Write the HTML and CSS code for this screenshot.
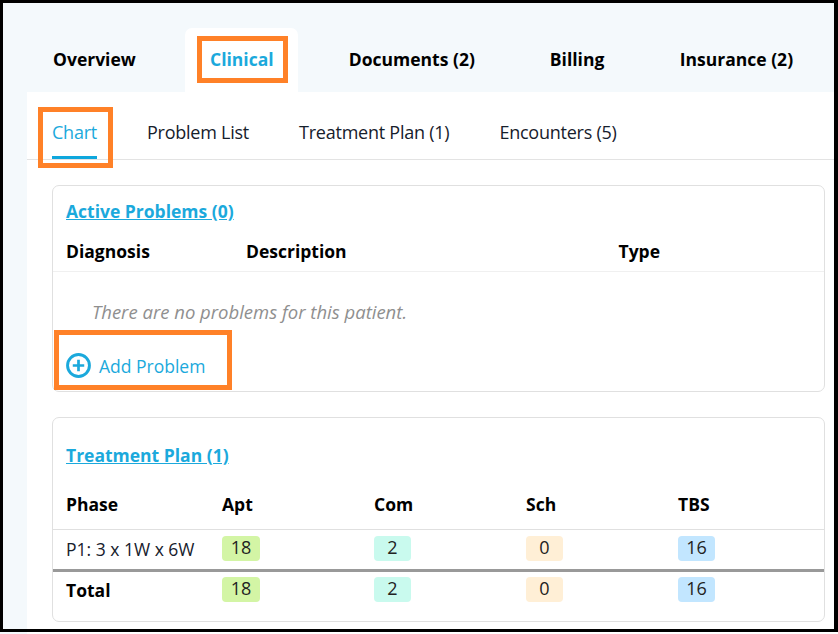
FILE: index.html
```html
<!DOCTYPE html>
<html lang="en">
<head>
<meta charset="utf-8">
<title>Clinical</title>
<link rel="stylesheet" href="styles.css">
</head>
<body>
<div class="frame">
  <nav class="tabs">
    <a class="tab">Overview</a>
    <a class="tab tab-active">Clinical</a>
    <a class="tab tab-docs">Documents (2)</a>
    <a class="tab tab-billing">Billing</a>
    <a class="tab tab-ins">Insurance (2)</a>
  </nav>
  <main class="content">
    <nav class="subtabs">
      <a class="subtab subtab-active">Chart</a>
      <a class="subtab">Problem List</a>
      <a class="subtab">Treatment Plan (1)</a>
      <a class="subtab">Encounters (5)</a>
    </nav>
    <section class="card card-problems">
      <h2 class="card-title">Active Problems (0)</h2>
      <div class="problem-head">
        <span class="col-diagnosis">Diagnosis</span>
        <span class="col-description">Description</span>
        <span>Type</span>
      </div>
      <p class="empty">There are no problems for this patient.</p>
      <a class="add">
        <svg class="add-icon" viewBox="0 0 24 24" width="25" height="25" aria-hidden="true">
          <circle cx="12" cy="12" r="10.5" fill="none" stroke="#1ba9dc" stroke-width="2.8"/>
          <path d="M12 6.5v11M6.5 12h11" fill="none" stroke="#1ba9dc" stroke-width="2.6"/>
        </svg>
        <span>Add Problem</span>
      </a>
    </section>
    <section class="card card-plan">
      <h2 class="card-title">Treatment Plan (1)</h2>
      <div class="row row-head">
        <span>Phase</span><span>Apt</span><span>Com</span><span>Sch</span><span>TBS</span>
      </div>
      <div class="row row-data">
        <span class="phase">P1: 3 x 1W x 6W</span>
        <b class="pill pill-apt">18</b>
        <b class="pill pill-com">2</b>
        <b class="pill pill-sch">0</b>
        <b class="pill pill-tbs">16</b>
      </div>
      <div class="row row-total">
        <strong class="total">Total</strong>
        <b class="pill pill-apt">18</b>
        <b class="pill pill-com">2</b>
        <b class="pill pill-sch">0</b>
        <b class="pill pill-tbs">16</b>
      </div>
    </section>
  </main>
  <div class="mark mark-clinical"></div>
  <div class="mark mark-chart"></div>
  <div class="mark mark-add"></div>
</div>
<div class="edge"></div>
</body>
</html>
```
FILE: styles.css
```css
* { box-sizing: border-box; }
html, body { margin: 0; height: 100%; background: #fff; }
body { font-family: "Open Sans", sans-serif; color: #111; overflow: hidden; }
.frame {
  position: relative;
  width: 838px;
  height: 632px;
  border: solid #000;
  border-width: 3px 4px 3px 3px;
  background: #f4f9fc;
  overflow: hidden;
}
.edge { width: 27px; height: 2px; background: #f4f9fc; }
.tabs { display: flex; height: 89px; padding: 25px 0 0 24px; font-size: 17.5px; font-weight: 700; color: #000; }
.tab { display: flex; align-items: center; height: 64px; padding: 0 0 2px 26px; }
.tab-active { width: 113px; padding: 0 0 2px 1px; justify-content: center; margin: 0 51px 0 49px; background: #fff; border-radius: 7px 7px 0 0; color: #1ba9dc; }
.tab-docs { padding: 0 0 2px; width: 201px; }
.tab-billing { padding: 0 0 2px; width: 130px; }
.tab-ins { padding: 0 0 2px; }
.content { margin-left: 24px; height: 540px; background: #fff; padding-bottom: 10px; }
.subtabs { display: flex; height: 68px; border-bottom: 1px solid #e3e3e3; padding-left: 25px; gap: 50px; font-size: 18px; color: #16202c; }
.subtab { height: 67px; line-height: 80px; letter-spacing: -.24px; }
.subtab-active { color: #1ba9dc; border-bottom: 3px solid #0ea7dd; }
.card { margin: 25px 9px 0 25px; border: 1px solid #e0e0e0; border-radius: 7px; background: #fff; }
.card-problems { height: 207px; padding-top: 14px; }
.card-plan { margin-top: 25px; height: 205px; padding-top: 26px; }
.card-title { margin: 0 0 0 13px; font-size: 17.5px; line-height: 22px; font-weight: 700; color: #1ba9dc; text-decoration: underline; }
.problem-head { display: flex; height: 42px; margin-top: 8px; padding: 9px 0 0 13px; border-bottom: 1px solid #f0f0f0; font-size: 17.5px; font-weight: 700; color: #000; line-height: 24px; }
.col-diagnosis { width: 180px; }
.col-description { width: 372.5px; }
.empty { margin: 28px 0 0 39px; font-size: 18.5px; line-height: 24px; font-style: italic; color: #8f8f8f; }
.add { display: flex; align-items: center; gap: 8px; margin: 29px 0 0 13px; font-size: 17.5px; line-height: 24px; color: #1ba9dc; }
.row { display: grid; grid-template-columns: 156px 152px 152px 152px 1fr; padding-left: 13px; font-size: 17.5px; justify-items: start; }
.row-head { height: 48px; margin-top: 16px; padding-top: 10px; border-bottom: 1px solid #e0e0e0; font-weight: 700; color: #000; line-height: 24px; }
.row-data { height: 42px; padding-top: 6px; border-bottom: 3px solid #999; }
.row-total { height: 41px; padding-top: 5px; }
.phase { font-size: 17.5px; line-height: 27px; color: #16202c; }
.total { font-weight: 700; color: #000; line-height: 27px; }
.pill { display: block; width: 37px; height: 25px; border-radius: 4px; font-size: 18px; font-weight: 400; line-height: 23px; text-align: center; color: #222; }
.pill-apt { width: 38px; background: #d3f5a5; }
.pill-com { background: #c9faee; }
.pill-sch { background: #ffefd6; }
.pill-tbs { background: #c2e6ff; }
.mark { position: absolute; border: 5px solid #ff8128; }
.mark-clinical { left: 194px; top: 33px; width: 91px; height: 47px; }
.mark-chart { left: 35px; top: 104px; width: 75px; height: 61px; }
.mark-add { left: 51px; top: 327px; width: 178px; height: 60px; }
```
